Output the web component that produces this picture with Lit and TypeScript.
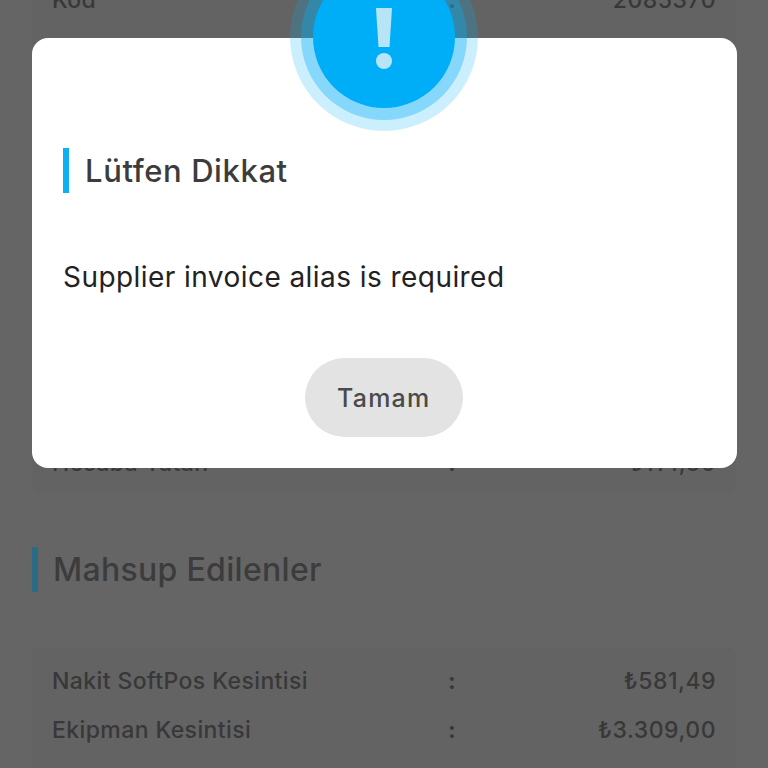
import { LitElement, html, css } from "lit";
import { customElement } from "lit/decorators.js";

@customElement("app-root")
export class AppRoot extends LitElement {
  static styles = css`
    :host { display: block; width: 768px; height: 768px; overflow: hidden; position: relative; background: #656565; font-family: "Inter", "Liberation Sans", sans-serif; }
    .page { display: flex; flex-direction: column; margin-top: -25px; padding: 0 32px; }
    .card { background: #636363; border-radius: 8px; padding: 0 20px; display: flex; flex-direction: column; }
    .first { height: 518px; }
    .spacer { height: 414px; }
    .row { height: 49px; display: grid; grid-template-columns: 396px 1fr 1fr; align-items: center; font-size: 23px; font-weight: 500; letter-spacing: .4px; color: #383838; }
    .colon { font-weight: 700; }
    .val { text-align: right; letter-spacing: .5px; }
    .sec { display: flex; align-items: center; gap: 15px; height: 45px; margin: 54px 0 56px; }
    .sec i { width: 6px; height: 45px; background: #2b6b85; display: block; }
    .sec span { font-size: 32px; font-weight: 500; letter-spacing: .3px; color: #3c3c3c; }
    .second { padding-top: 8px; height: 200px; }
    .scrim { position: absolute; inset: 0; display: block; }
    .dialog { position: absolute; left: 31.500px; top: 38px; width: 705px; height: 430px; box-sizing: border-box; padding: 110px 32px 31px 31.500px; background: #fff; border-radius: 16px; display: flex; flex-direction: column; }
    .badge { position: absolute; left: 258.500px; top: -95px; width: 188px; height: 188px; border-radius: 50%; background: rgba(0,174,247,.2); display: flex; align-items: center; justify-content: center; }
    .ring { width: 166px; height: 166px; border-radius: 50%; background: rgba(0,174,247,.35); display: flex; align-items: center; justify-content: center; }
    .disc { width: 142px; height: 142px; border-radius: 50%; background: #00aef7; display: block; }
    .disc svg { display: block; }
    .title { display: flex; align-items: center; gap: 16px; height: 45px; }
    .title i { width: 6px; height: 45px; background: #0cb0f2; display: block; }
    .title span { font-size: 31px; font-weight: 500; letter-spacing: .6px; color: #3c3c3c; }
    .msg { margin-top: 64px; font-size: 28px; letter-spacing: .44px; line-height: 40px; color: #222; }
    .actions { margin-top: auto; display: flex; justify-content: center; }
    .btn { width: 158px; height: 79px; border: 0; border-radius: 40px; background: #e3e3e3; color: #4a4a4a; font: 500 25px "Inter", "Liberation Sans", sans-serif; letter-spacing: 1.2px; }
  `;

  render() {
    return html`
      <div class="page">
        <div class="card first">
          <div class="row"><span>Kod</span><span class="colon">:</span><span class="val">2085370</span></div>
          <div class="spacer"></div>
          <div class="row"><span>Hesaba Yatan</span><span class="colon">:</span><span class="val">₺114,30</span></div>
        </div>
        <div class="sec"><i></i><span>Mahsup Edilenler</span></div>
        <div class="card second">
          <div class="row"><span>Nakit SoftPos Kesintisi</span><span class="colon">:</span><span class="val">₺581,49</span></div>
          <div class="row"><span>Ekipman Kesintisi</span><span class="colon">:</span><span class="val">₺3.309,00</span></div>
        </div>
      </div>
      <div class="scrim">
        <div class="dialog">
          <div class="badge"><div class="ring"><div class="disc">
            <svg width="142" height="142" viewBox="0 0 142 142"><path d="M63 42h16l-2.500 39h-11z" fill="#b8e4f8"/><circle cx="71" cy="95" r="8" fill="#b8e4f8"/></svg>
          </div></div></div>
          <div class="title"><i></i><span>Lütfen Dikkat</span></div>
          <div class="msg">Supplier invoice alias is required</div>
          <div class="actions"><button class="btn">Tamam</button></div>
        </div>
      </div>
    `;
  }
}
